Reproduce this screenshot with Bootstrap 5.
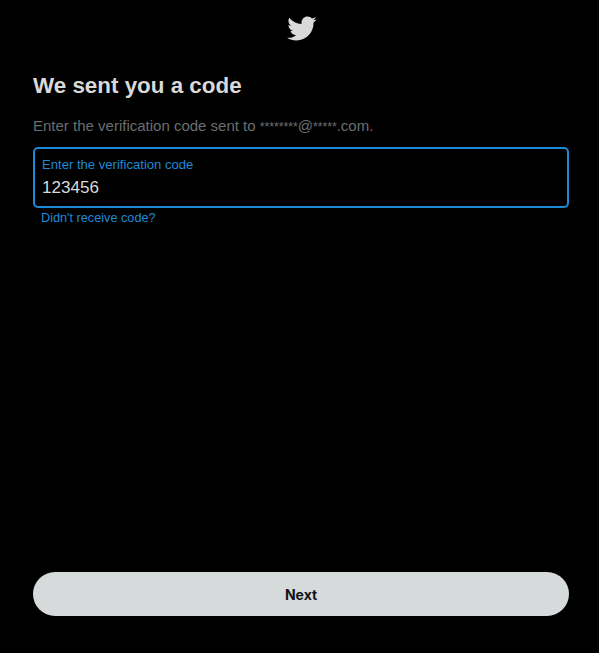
<!DOCTYPE html>
<html lang="en"><head><meta charset="utf-8"><title>We sent you a code</title>
<link href="https://cdn.jsdelivr.net/npm/bootstrap@5.3.0/dist/css/bootstrap.min.css" rel="stylesheet">
<style>
html,body{background:#000;height:100%}
body{font-family:"Liberation Sans",Arial,sans-serif;overflow:hidden}
.shell{height:653px;padding:0 30px 37px 33px}
.bird{width:31px;height:31px;margin-top:13px;fill:#d9d9d9;align-self:center}
.ttl{font-size:22.4px;font-weight:700;color:#d9d9d9;line-height:28px;margin:28px 0 0}
.sub{font-size:15px;color:#6b6e71;line-height:20px;margin:16px 0 0}
.stars{font-size:12.2px}
.field{height:61px;border:2px solid #1d8ad6;border-radius:5px;margin-top:10px;padding:8px 7px 0}
.lab{font-size:13.1px;line-height:16px;color:#1d8ad6}
.val{font-size:17.1px;line-height:22px;color:#d9d9d9;margin-top:4px;background:transparent;border:0;padding:0;width:100%;outline:0}
.resend{font-size:12.7px;line-height:16px;color:#1d8ad6;text-decoration:none;margin:2px 0 0 8px;align-self:flex-start}
.go{height:44px;border-radius:22px;background:#d6dadb;color:#0f1419;font-family:Inter,sans-serif;font-size:14px;font-weight:700;border:0;padding:0}
.go:hover,.go:active{background:#d6dadb!important;color:#0f1419!important}
</style></head>
<body>
<main class="shell d-flex flex-column">
<svg class="bird" viewBox="0 0 24 24" role="img" aria-label="Twitter"><path d="M23.643 4.937c-.835.37-1.732.62-2.675.733.962-.576 1.7-1.49 2.048-2.578-.9.534-1.897.922-2.958 1.13-.85-.904-2.06-1.47-3.4-1.47-2.572 0-4.658 2.086-4.658 4.66 0 .364.042.718.12 1.06-3.873-.195-7.304-2.05-9.602-4.868-.4.69-.63 1.49-.63 2.342 0 1.616.823 3.043 2.072 3.878-.764-.025-1.482-.234-2.11-.583v.06c0 2.257 1.605 4.14 3.737 4.568-.392.106-.803.162-1.227.162-.3 0-.593-.028-.877-.082.593 1.85 2.313 3.198 4.352 3.234-1.595 1.25-3.604 1.995-5.786 1.995-.376 0-.747-.022-1.112-.065 2.062 1.323 4.51 2.093 7.14 2.093 8.57 0 13.255-7.098 13.255-13.254 0-.2-.005-.402-.014-.602.91-.658 1.7-1.477 2.323-2.41z"/></svg>
<h1 class="ttl">We sent you a code</h1>
<p class="sub">Enter the verification code sent to <span class="stars">********</span>@<span class="stars">*****</span>.com.</p>
<div class="field d-flex flex-column">
<label class="lab" for="code">Enter the verification code</label>
<input class="val" id="code" value="123456">
</div>
<a class="resend" href="#">Didn't receive code?</a>
<button class="btn go mt-auto" type="button">Next</button>
</main>
<script src="https://cdn.jsdelivr.net/npm/bootstrap@5.3.0/dist/js/bootstrap.bundle.min.js"></script>
</body></html>
